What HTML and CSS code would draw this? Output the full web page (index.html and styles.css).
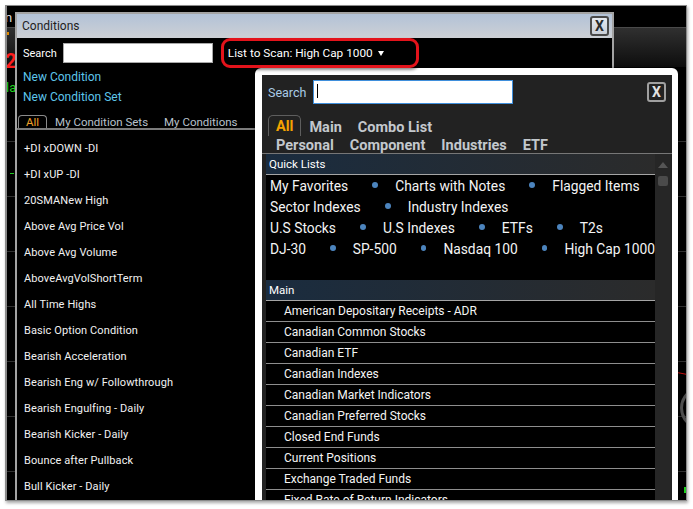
FILE: index.html
```html
<!DOCTYPE html>
<html>
<head>
<meta charset="utf-8">
<link rel="stylesheet" href="styles.css">
</head>
<body>
<div class="frame">
  <div class="desk">
    <div class="topbar"></div>
    <div class="band"></div>
    <div class="chart"></div>
    <span class="mark m-n">n</span>
    <span class="mark m-or"></span>
    <span class="mark m-2">2</span>
    <span class="mark m-la">la</span>
    <span class="mark m-tick"></span>
    <span class="mark m-red"></span>
    <span class="mark m-arc"></span>
    <span class="mark m-grn"></span>

    <div class="win">
      <div class="win-title">
        <span class="win-name">Conditions</span>
        <span class="xbtn light">X</span>
      </div>
      <div class="win-body">
        <div class="srow">
          <span class="slabel">Search</span>
          <span class="sinput"></span>
          <span class="scan">List to Scan: High Cap 1000<i class="caret"></i></span>
        </div>
        <div class="links">
          <div>New Condition</div>
          <div>New Condition Set</div>
        </div>
        <div class="ctabs">
          <span class="ctab on">All</span>
          <span class="ctab">My Condition Sets</span>
          <span class="ctab">My Conditions</span>
        </div>
        <div class="clist">
          <div>+DI xDOWN -DI</div>
          <div>+DI xUP -DI</div>
          <div>20SMANew High</div>
          <div>Above Avg Price Vol</div>
          <div>Above Avg Volume</div>
          <div>AboveAvgVolShortTerm</div>
          <div>All Time Highs</div>
          <div>Basic Option Condition</div>
          <div>Bearish Acceleration</div>
          <div>Bearish Eng w/ Followthrough</div>
          <div>Bearish Engulfing - Daily</div>
          <div>Bearish Kicker - Daily</div>
          <div>Bounce after Pullback</div>
          <div>Bull Kicker - Daily</div>
        </div>
      </div>
    </div>

    <div class="drop">
      <div class="dhead">
        <span class="dlabel">Search</span>
        <span class="dinput"><i class="cursor"></i></span>
        <span class="xbtn dark">X</span>
      </div>
      <div class="dtabs">
        <div class="trow r1">
          <span class="dtab on">All</span>
          <span class="dtab">Main</span>
          <span class="dtab">Combo List</span>
        </div>
        <div class="trow r2">
          <span class="dtab">Personal</span>
          <span class="dtab">Component</span>
          <span class="dtab">Industries</span>
          <span class="dtab">ETF</span>
        </div>
      </div>
      <div class="dcontent">
        <div class="lists">
          <div class="ghead">Quick Lists</div>
          <div class="quick">
            <div class="qrow"><span>My Favorites</span><i class="dot"></i><span>Charts with Notes</span><i class="dot"></i><span>Flagged Items</span></div>
            <div class="qrow"><span>Sector Indexes</span><i class="dot"></i><span>Industry Indexes</span></div>
            <div class="qrow"><span>U.S Stocks</span><i class="dot"></i><span>U.S Indexes</span><i class="dot"></i><span>ETFs</span><i class="dot"></i><span>T2s</span></div>
            <div class="qrow"><span>DJ-30</span><i class="dot"></i><span>SP-500</span><i class="dot"></i><span>Nasdaq 100</span><i class="dot"></i><span>High Cap 1000</span></div>
          </div>
          <div class="ghead">Main</div>
          <div class="mlist">
            <div>American Depositary Receipts - ADR</div>
            <div>Canadian Common Stocks</div>
            <div>Canadian ETF</div>
            <div>Canadian Indexes</div>
            <div>Canadian Market Indicators</div>
            <div>Canadian Preferred Stocks</div>
            <div>Closed End Funds</div>
            <div>Current Positions</div>
            <div>Exchange Traded Funds</div>
            <div>Fixed Rate of Return Indicators</div>
          </div>
        </div>
        <div class="scroll">
          <i class="sup"></i>
          <i class="thumb"></i>
        </div>
      </div>
    </div>
  </div>
</div>
</body>
</html>
```
FILE: styles.css
```css
* { box-sizing: border-box; }
html, body { margin: 0; padding: 0; }
body {
  width: 693px;
  height: 509px;
  background: #ffffff;
  font-family: Roboto, "Open Sans", sans-serif;
  overflow: hidden;
}
.frame {
  margin: 5px 0 0 5px;
  width: 682px;
  height: 496px;
  border: 1px solid #8a8a8a;
  border-left-width: 2px;
  box-shadow: 1px 2px 3px rgba(0,0,0,0.35);
}
.desk {
  position: relative;
  width: 679px;
  height: 494px;
  background: #000;
  overflow: hidden;
  display: flex;
  flex-direction: column;
}
.topbar { height: 22px; flex: none; border-bottom: 1px solid #4a4a4a; }
.band { height: 39px; flex: none; background: linear-gradient(#303030, #0d0d0d); }
.chart {
  flex: 1;
  background: repeating-linear-gradient(to bottom, transparent 0 54px, #303030 54px 55px);
  background-position: 0 20px;
}

/* canvas marks behind the windows */
.mark { position: absolute; display: block; }
.m-n { left: -2px; top: 5px; color: #dcdcdc; font-size: 13px; line-height: 13px; }
.m-or { left: 0; top: 26px; width: 2px; height: 3px; background: #e08a00; }
.m-2 { left: -2px; top: 45px; color: #ff1c1c; font-size: 20px; font-weight: 700; line-height: 20px; }
.m-la { left: -1px; top: 75px; color: #1ed01e; font-size: 13px; line-height: 14px; }
.m-tick { left: 3px; top: 167px; width: 4px; height: 1px; background: #22c822; }
.m-red { left: 670px; top: 367px; width: 10px; height: 1px; background: #c01010; transform: rotate(12deg); }
.m-arc { left: 673px; top: 380px; width: 44px; height: 44px; border: 3px solid #4e4e4e; border-radius: 50%; }
.m-grn { left: 677px; top: 481px; width: 3px; height: 6px; background: #1bd01b; }

/* Conditions window */
.win {
  position: absolute;
  left: 8px;
  top: 6px;
  width: 599px;
  bottom: -12px;
  border: 2px solid #a3a3a3;
  background: #000;
  display: flex;
  flex-direction: column;
}
.win-title {
  height: 24px;
  flex: none;
  background: linear-gradient(#b2c2d7, #cdd0d5);
  display: flex;
  align-items: center;
  justify-content: space-between;
  padding: 0 3px 0 5px;
}
.win-name { font-size: 12px; color: #1e1e1e; }
.xbtn {
  width: 19px;
  height: 20px;
  border-radius: 3px;
  display: flex;
  align-items: center;
  justify-content: center;
  font-size: 14px;
  font-weight: 700;
  line-height: 1;
}
.xbtn.light { border: 2px solid #4a4a4a; background: linear-gradient(#e4e8ee, #c9ced6); color: #2a2a2a; }
.xbtn.dark { border: 2px solid #a0a0a0; background: #222; color: #e2e2e2; }

.win-body { flex: 1; display: flex; flex-direction: column; }
.srow { height: 30px; display: flex; align-items: center; padding-left: 6px; }
.slabel { font-size: 11px; color: #fff; margin-right: 6px; }
.sinput { width: 150px; height: 20px; background: #fff; border: 1px solid #a8a8a8; }
.scan {
  position: relative;
  z-index: 5;
  margin-left: 8px;
  width: 198px;
  height: 30px;
  border: 3px solid #e3131b;
  border-radius: 9px;
  box-shadow: 1px 2px 3px rgba(0,0,0,0.45);
  padding-left: 4px;
  display: flex;
  align-items: center;
  font-size: 11.8px;
  color: #fff;
  white-space: nowrap;
}
.caret {
  display: block;
  margin-left: 5px;
  width: 0; height: 0;
  border-left: 3.5px solid transparent;
  border-right: 3.5px solid transparent;
  border-top: 5px solid #fff;
}
.links { margin-top: -1px; padding-left: 6px; font-size: 12px; line-height: 20px; color: #5ec5ea; }
.ctabs {
  margin-top: 8px;
  margin-right: 350px;
  display: flex;
  padding-left: 1px;
  border-bottom: 2px solid #7c7c7c;
}
.ctab { padding: 1px 8px 0; font-size: 11.5px; line-height: 12px; height: 13px; color: #b8c2cc; white-space: nowrap; }
.ctab.on { padding: 0 7px; border: 1px solid #8a8a8a; border-bottom: none; border-radius: 4px 4px 0 0; color: #f0a028; }
.clist { padding: 6px 0 0 7px; }
.clist div { height: 26px; line-height: 26px; font-size: 11px; letter-spacing: 0.1px; color: #f2f2f2; white-space: nowrap; }

/* dropdown panel */
.drop {
  position: absolute;
  left: 248px;
  top: 62px;
  width: 423px;
  bottom: -24px;
  z-index: 3;
  border: 7px solid #fff;
  border-right-width: 6px;
  border-radius: 6px 6px 0 0;
  background: #222;
  box-shadow: 0 0 3px rgba(0,0,0,0.5);
  display: flex;
  flex-direction: column;
}
.dhead { height: 24px; margin-top: 5px; padding: 0 6px; display: flex; align-items: center; flex: none; }
.dlabel { font-size: 12.5px; color: #a9cbe6; margin-right: 7px; }
.dinput { width: 200px; height: 24px; background: #fff; border: 1px solid #3f8fdc; padding: 3px 0 0 3px; }
.cursor { display: block; width: 1px; height: 14px; background: #000; }
.dhead .xbtn { margin-left: auto; }
.dtabs { margin-top: 11px; padding-left: 6px; border-bottom: 1px solid #777; flex: none; }
.trow { display: flex; align-items: flex-start; }
.trow.r1 { height: 21px; }
.trow.r2 { height: 17px; }
.dtab { padding: 0 8px; font-size: 14.5px; font-weight: 700; color: #c3c8cd; white-space: nowrap; }
.r1 .dtab { padding-top: 4px; line-height: 17px; }
.r2 .dtab { padding-top: 2px; line-height: 15px; }
.r1 .dtab.on { height: 21px; padding: 3px 7px 0; line-height: 16px; border: 1px solid #5e5e5e; border-bottom: none; border-radius: 5px 5px 0 0; color: #f5a300; }

.dcontent { flex: 1; display: flex; overflow: hidden; }
.lists { width: 389px; margin-left: 4px; background: #000; overflow: hidden; }
.ghead {
  height: 21px;
  line-height: 20px;
  padding-left: 3px;
  font-size: 11.5px;
  color: #fff;
  border-bottom: 1px solid #a5a5a5;
  background: linear-gradient(to right, #1a2c3f, #2b2b2b);
}
.quick { padding: 0 0 21px 4px; }
.qrow { height: 21px; display: flex; align-items: center; font-size: 13.8px; color: #f4f4f4; white-space: nowrap; }
.dot { display: block; width: 6px; height: 6px; border-radius: 50%; background: #4c84bd; margin: 0 17px 2px 24px; }
.mlist div {
  height: 21px;
  line-height: 21px;
  padding-left: 18px;
  font-size: 12px;
  color: #f4f4f4;
  border-bottom: 1px solid #8e8e8e;
  white-space: nowrap;
}
.scroll { width: 16px; background: #262626; display: flex; flex-direction: column; align-items: center; }
.sup { display: block; margin-top: 8px; width: 0; height: 0; border-left: 5px solid transparent; border-right: 5px solid transparent; border-bottom: 6px solid #555; }
.thumb { display: block; margin-top: 8px; width: 10px; height: 10px; border-radius: 2px; background: #4a4a4a; }
```
